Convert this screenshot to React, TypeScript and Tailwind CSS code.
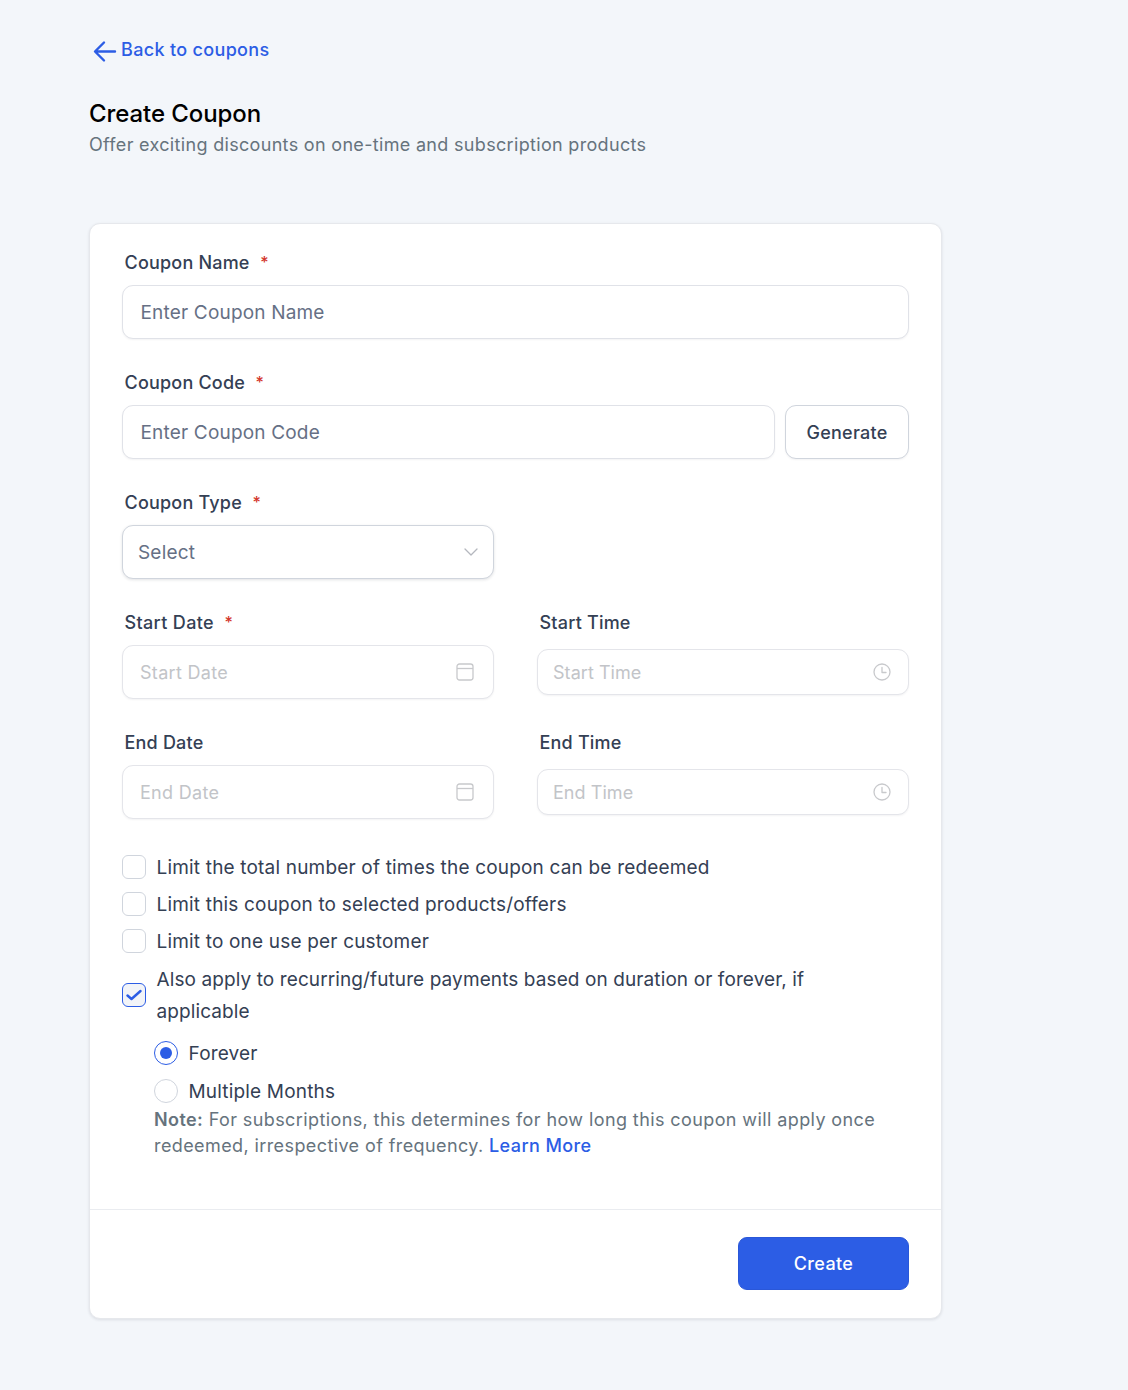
import React from "react";

const Label = ({ text, req, className = "" }: { text: string; req?: boolean; className?: string }) => (
  <div className={`flex h-6 items-center pl-[2.5px] text-[18px] font-medium leading-6 tracking-[0.2px] text-[#344054] ${className}`}>
    <span>{text}</span>
    {req && <span className="ml-[10.5px] -translate-y-[1px] text-[16px] text-[#d3362b]">*</span>}
  </div>
);

const CalendarIcon = () => (
  <svg width="18" height="18" viewBox="0 0 18 18" fill="none" stroke="#c8c9cc" strokeWidth="1.3">
    <rect x="1" y="1" width="16" height="16" rx="2.5" />
    <path d="M1 5.5H17" />
  </svg>
);

const ClockIcon = () => (
  <svg width="18" height="18" viewBox="0 0 18 18" fill="none" stroke="#c8c9cc" strokeWidth="1.3" strokeLinecap="round" strokeLinejoin="round">
    <circle cx="9" cy="9" r="8" />
    <path d="M9 4.5V9.5H13" />
  </svg>
);

const DateField = ({ placeholder }: { placeholder: string }) => (
  <div className="flex h-[54px] items-center justify-between rounded-[11px] border border-[#e4e5ea] bg-white pl-[17px] pr-[19px] text-[18px] tracking-[0.3px] text-[#c2c4c8] shadow-[0_1px_2px_rgba(16,24,40,0.05)]">
    <span>{placeholder}</span>
    <CalendarIcon />
  </div>
);

const TimeField = ({ placeholder }: { placeholder: string }) => (
  <div className="flex h-[46px] items-center justify-between rounded-[11px] border border-[#e4e5ea] bg-white pl-[15px] pr-[17px] text-[18px] tracking-[0.05px] text-[#c2c4c8] shadow-[0_1px_2px_rgba(16,24,40,0.05)]">
    <span>{placeholder}</span>
    <ClockIcon />
  </div>
);

const Check = ({ text, className = "" }: { text: string; className?: string }) => (
  <div className={`flex h-8 items-center gap-[10.5px] ${className}`}>
    <div className="h-6 w-6 shrink-0 rounded-[6px] border border-[#d0d5dd] bg-white" />
    <span className="pt-[2px]">{text}</span>
  </div>
);

export default function App() {
  return (
    <div className="min-h-[1390px] bg-[#f3f6fa] pl-[89px] pt-[35px] pr-[186px] font-['Inter',sans-serif]">
      <a className="ml-[4px] flex h-7 items-center text-[18px] font-medium tracking-[0.33px] text-[#2c5de5]">
        <svg width="24" height="24" viewBox="0 0 24 24" fill="none" stroke="#2c5de5" strokeWidth="2.4" strokeLinecap="round" strokeLinejoin="round" className="translate-y-[2px]">
          <path d="M22 12.5H2.5M11 3.5L2 12.5L11 21.5" />
        </svg>
        <span className="ml-[4px]">Back to coupons</span>
      </a>
      <h1 className="mt-[35px] text-[24px] font-medium leading-8 tracking-[-0.08px] text-black">Create Coupon</h1>
      <p className="mt-[1px] text-[18px] leading-7 tracking-[0.32px] text-[#66737d]">Offer exciting discounts on one-time and subscription products</p>

      <div className="mt-[64px] overflow-hidden rounded-[11px] border border-[#e6e8ec] bg-white shadow-[0_1px_3px_rgba(16,24,40,0.1)]">
        <div className="px-[32px] pt-[27px] pb-[50px]">
          <Label text="Coupon Name" req />
          <div className="mt-[10px] flex h-[54px] items-center rounded-[11px] border border-[#e0e2e8] bg-white pl-[17.5px] pt-[2px] text-[19px] tracking-[0.18px] text-[#667085] shadow-[0_1px_2px_rgba(16,24,40,0.05)]">
            Enter Coupon Name
          </div>

          <Label text="Coupon Code" req className="mt-[32px]" />
          <div className="mt-[10px] flex gap-[10px]">
            <div className="flex h-[54px] flex-1 items-center rounded-[11px] border border-[#e0e2e8] bg-white pl-[17.5px] pt-[2px] text-[19px] tracking-[0.18px] text-[#667085] shadow-[0_1px_2px_rgba(16,24,40,0.05)]">
              Enter Coupon Code
            </div>
            <button className="h-[54px] w-[124px] rounded-[11px] border border-[#d0d5dd] bg-white text-[18px] font-medium tracking-[0.25px] text-[#344054] shadow-[0_1px_2px_rgba(16,24,40,0.05)]">
              Generate
            </button>
          </div>

          <Label text="Coupon Type" req className="mt-[32px]" />
          <div className="mt-[10px] flex h-[54px] w-[372px] items-center justify-between rounded-[11px] border border-[#d0d5dd] bg-white pl-[15px] pr-[14px] text-[19px] tracking-[0.18px] text-[#667085] shadow-[0_1px_3px_rgba(16,24,40,0.12)]">
            <span className="pt-[2px]">Select</span>
            <svg width="16" height="16" viewBox="0 0 16 16" fill="none" stroke="#b4b7be" strokeWidth="1.3" strokeLinecap="round" strokeLinejoin="round">
              <path d="M2 5L8 11L14 5" />
            </svg>
          </div>

          <div className="mt-[32px] grid grid-cols-[372px_372px] gap-x-[43px]">
            <div>
              <Label text="Start Date" req className="tracking-[0.35px]" />
              <div className="mt-[10px]"><DateField placeholder="Start Date" /></div>
            </div>
            <div>
              <Label text="Start Time" />
              <div className="mt-[14px]"><TimeField placeholder="Start Time" /></div>
            </div>
            <div className="mt-[32px]">
              <Label text="End Date" />
              <div className="mt-[10px]"><DateField placeholder="End Date" /></div>
            </div>
            <div className="mt-[32px]">
              <Label text="End Time" />
              <div className="mt-[14px]"><TimeField placeholder="End Time" /></div>
            </div>
          </div>

          <div className="mt-[32px] text-[19px] leading-8 tracking-[0.18px] text-[#344054]">
            <Check text="Limit the total number of times the coupon can be redeemed" />
            <Check text="Limit this coupon to selected products/offers" className="mt-[5px]" />
            <Check text="Limit to one use per customer" className="mt-[5px]" />
            <div className="mt-[7px] flex items-center gap-[10.5px] pr-[90px]">
              <div className="mb-[2px] flex h-6 w-6 shrink-0 items-center justify-center rounded-[6px] border border-[#2c5de5] bg-[#f2f4f8]">
                <svg width="16" height="16" viewBox="0 0 16 16" fill="none" stroke="#2c5de5" strokeWidth="2.4" strokeLinecap="round" strokeLinejoin="round">
                  <path d="M1.5 8.5L5.5 12L14.5 4" />
                </svg>
              </div>
              <span className="tracking-[0.1px]">Also apply to recurring/future payments based on duration or forever, if applicable</span>
            </div>
            <div className="ml-[32px] mt-[9px] flex h-8 items-center gap-[10.5px]">
              <div className="flex h-6 w-6 items-center justify-center rounded-full border border-[#2c5de5] bg-white">
                <div className="h-3 w-3 rounded-full bg-[#2c5de5]" />
              </div>
              <span className="pt-[2px]">Forever</span>
            </div>
            <div className="ml-[32px] mt-[6px] flex h-8 items-center gap-[10.5px]">
              <div className="h-6 w-6 rounded-full border border-[#d0d5dd] bg-white" />
              <span className="pt-[2px]">Multiple Months</span>
            </div>
          </div>
          <p className="ml-[32px] text-[18px] leading-[26px] tracking-[0.4px] text-[#66737d]">
            <span className="font-semibold">Note:</span> For subscriptions, this determines for how long this coupon will apply once redeemed, irrespective of frequency. <span className="font-medium text-[#2c5de5]">Learn More</span>
          </p>
        </div>
        <div className="flex justify-end border-t border-[#eaecf0] px-[32px] pb-[28px] pt-[27px]">
          <button className="h-[53px] w-[171px] rounded-[9px] border border-[#2a57d8] bg-[#2c5de5] text-[18px] font-medium tracking-[0.33px] text-white">
            Create
          </button>
        </div>
      </div>
    </div>
  );
}
